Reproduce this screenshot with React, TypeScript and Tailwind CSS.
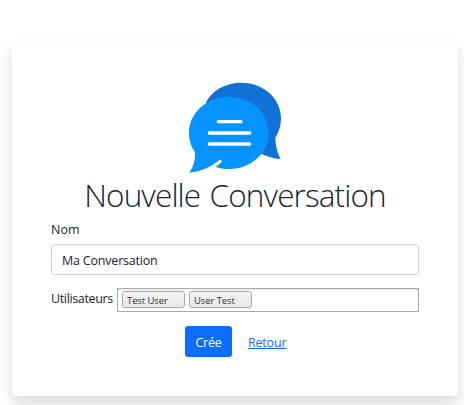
const users = ["Test User", "User Test"];

function Logo() {
  return (
    <svg
      className="mx-auto block h-[92px] w-[92px]"
      viewBox="27 21 276 276"
      fill="none"
    >
      <path
        d="M77 84C94 47 136 23 184 23C250 23 303 70 303 130C303 151 297 171 286 188C287 211 291 233 302 252C281 250 261 245 244 236L150 180Z"
        fill="#1072D6"
      />
      <path
        d="M147 65C213 65 266 113 266 174C266 234 213 282 147 282C132 282 118 280 106 275C113 271 119 266 125 260L118 255C94 276 62 290 28 293C41 275 46 255 45 232C33 215 27 196 27 174C27 113 81 65 147 65Z"
        fill="#0593FF"
      />
      <path
        d="M115 140H183M88 174H209M88 207H209"
        stroke="white"
        strokeWidth="10"
        strokeLinecap="round"
      />
      <path
        d="M121 259C116 264 111 268 104 272"
        stroke="white"
        strokeWidth="8"
        strokeLinecap="round"
      />
    </svg>
  );
}

export default function App() {
  return (
    <div className="h-[405px] w-[464px] overflow-hidden bg-white pt-[43px] pl-3 font-['Open_Sans',sans-serif] text-[12.5px] tracking-[-0.2px] text-[#212529]">
      <div className="h-[353px] w-[446px] rounded-[4px] bg-white px-[39px] pt-[39px] shadow-[0_7px_14px_rgba(0,0,0,0.15)]">
        <Logo />
        <h1 className="h-[41px] text-center text-[31.5px] leading-[41px] font-light tracking-[-0.88px] whitespace-nowrap [word-spacing:2px]">
          Nouvelle Conversation
        </h1>
        <form>
          <label
            htmlFor="nom"
            className="mt-[5px] block h-5 leading-5 tracking-normal"
          >
            Nom
          </label>
          <input
            id="nom"
            type="text"
            defaultValue="Ma Conversation"
            className="mt-1 block h-[31px] w-[368px] rounded-[3px] border border-[#ced4da] px-2.5 pt-0.5"
          />
          <div className="mt-[13px] flex h-6">
            <span className="w-[66px] shrink-0 leading-[22px] tracking-[-0.36px] whitespace-nowrap">
              Utilisateurs
            </span>
            <ul className="flex h-6 w-[302px] gap-1 border border-[#aaa] bg-linear-to-b from-[#eee] from-1% to-white to-15% pt-[2px] pl-1">
              {users.map((user) => (
                <li
                  key={user}
                  className="h-[17px] w-[63px] rounded-[3px] border border-[#aaa] bg-linear-to-b from-[#f4f4f4] to-[#e8e8e8] pl-1 text-[9.5px] leading-[17px] tracking-[-0.1px] whitespace-nowrap text-[#333]"
                >
                  {user}
                </li>
              ))}
            </ul>
          </div>
          <div className="mt-3.5 flex items-center gap-4 pl-[134px]">
            <button
              type="submit"
              className="h-[31px] w-[47px] rounded-[3px] bg-[#0d6efd] pt-[3px] text-white"
            >
              Crée
            </button>
            <a href="#" className="pt-[3px] text-[#0d6efd] underline">
              Retour
            </a>
          </div>
        </form>
      </div>
    </div>
  );
}
